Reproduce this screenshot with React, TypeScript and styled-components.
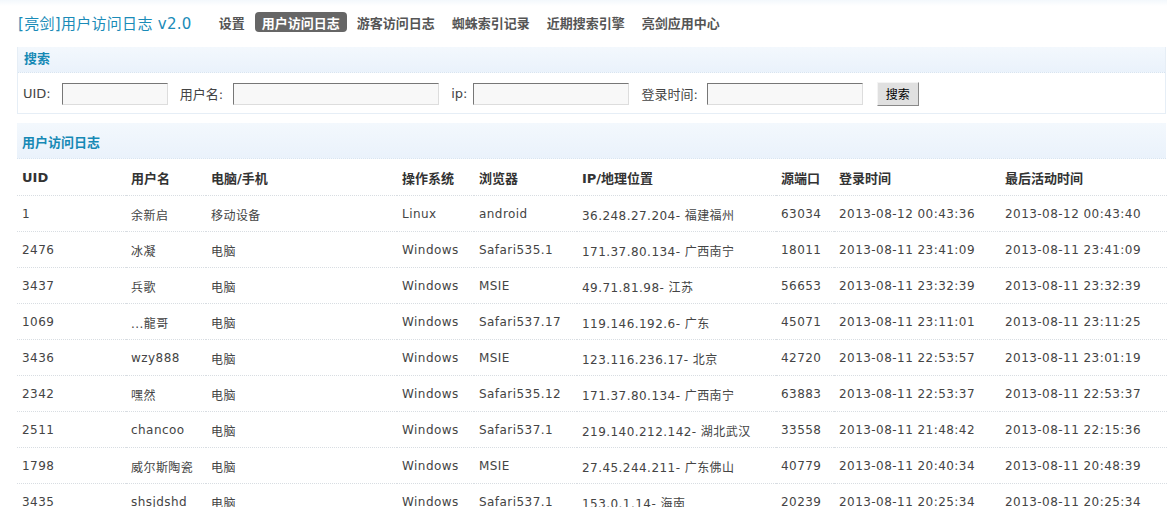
import styled, { createGlobalStyle } from 'styled-components';

const GlobalStyle = createGlobalStyle`
  html, body {
    margin: 0;
    padding: 0;
    background: #fff;
  }
  body {
    font-family: 'DejaVu Sans', 'Noto Sans CJK SC', sans-serif;
    font-size: 12px;
    color: #444;
  }
`;

const Page = styled.div`
  width: 1167px;
  height: 507px;
  overflow: hidden;
  padding: 0 1px 0 17px;
  box-sizing: border-box;
  background: linear-gradient(to bottom, #f3f8fc 0, #fff 6px);
`;

const Nav = styled.div`
  display: flex;
  align-items: center;
  gap: 3px;
  height: 44px;
  padding-left: 1px;
`;

const Title = styled.h1`
  margin: 0 17px 0 0;
  font-size: 15px;
  font-weight: normal;
  color: #1a8bb8;
  letter-spacing: 0.3px;
`;

const NavItem = styled.a<{ $active?: boolean }>`
  display: inline-flex;
  align-items: center;
  height: 20px;
  padding: 0 7px;
  border-radius: 4px;
  font-size: 13px;
  font-weight: bold;
  color: ${(p) => (p.$active ? '#fff' : '#555')};
  background: ${(p) => (p.$active ? '#666' : 'transparent')};
  white-space: nowrap;
`;

const Panel = styled.div`
  border: 1px solid #e6eef6;
  border-top: none;
  margin-top: 3px;
`;

const PanelHead = styled.div<{ $tall?: boolean }>`
  display: flex;
  align-items: ${(p) => (p.$tall ? 'center' : 'flex-start')};
  height: ${(p) => (p.$tall ? '36px' : '26px')};
  padding: ${(p) => (p.$tall ? '1px 5px 0' : '1px 6px 0')};
  box-sizing: border-box;
  background: linear-gradient(to bottom, #f3f8fd, #eaf2fb);
  border-bottom: 1px dotted #d8e4f0;
  font-weight: bold;
  color: #1689b5;
  font-size: 13px;
`;

const SearchRow = styled.form`
  display: flex;
  align-items: center;
  height: 40px;
  padding-left: 5px;
  padding-top: 1px;
  box-sizing: border-box;
`;

const Label = styled.label<{ $gap: number }>`
  margin-right: ${(p) => p.$gap}px;
  font-size: 13px;
  color: #444;
  white-space: nowrap;
`;

const Field = styled.input<{ $w: number }>`
  width: ${(p) => p.$w}px;
  height: 22px;
  box-sizing: border-box;
  margin: 0 12px 0 0;
  border: 1px solid #999;
  border-top-color: #777;
  border-left-color: #777;
  border-right-color: #ddd;
  border-bottom-color: #ddd;
  background: #f8f8f8;
  padding: 0 3px;
  font: inherit;
`;

const Button = styled.button`
  height: 24px;
  width: 42px;
  margin-left: 2px;
  padding: 0;
  border: 1px solid #888;
  border-top-color: #f4f4f4;
  border-left-color: #f4f4f4;
  background: #e0e0e0;
  color: #000;
  font-family: 'Noto Sans CJK SC', sans-serif;
  font-size: 12px;
`;

const ListPanel = styled(Panel)`
  margin-top: 9px;
  border: none;
`;

const Table = styled.table`
  width: 1150px;
  table-layout: fixed;
  border-collapse: collapse;
`;

const Th = styled.th`
  height: 35px;
  padding: 1px 5px 0;
  text-align: left;
  font-size: 13px;
  font-weight: bold;
  color: #333;
  border-bottom: 1px dotted #d8dde2;
  white-space: nowrap;
`;

const Td = styled.td`
  height: 34px;
  padding: 1px 5px 0;
  color: #444;
  border-bottom: 1px dotted #d8dde2;
  white-space: nowrap;
  letter-spacing: 0.45px;
`;

const columns = [
  { name: 'UID', w: 109 },
  { name: '用户名', w: 80 },
  { name: '电脑/手机', w: 191 },
  { name: '操作系统', w: 77 },
  { name: '浏览器', w: 103 },
  { name: 'IP/地理位置', w: 199 },
  { name: '源端口', w: 58 },
  { name: '登录时间', w: 166 },
  { name: '最后活动时间', w: 167 },
];

const rows = [
  ['1', '余新启', '移动设备', 'Linux', 'android', '36.248.27.204- 福建福州', '63034', '2013-08-12 00:43:36', '2013-08-12 00:43:40'],
  ['2476', '冰凝', '电脑', 'Windows', 'Safari535.1', '171.37.80.134- 广西南宁', '18011', '2013-08-11 23:41:09', '2013-08-11 23:41:09'],
  ['3437', '兵歌', '电脑', 'Windows', 'MSIE', '49.71.81.98- 江苏', '56653', '2013-08-11 23:32:39', '2013-08-11 23:32:39'],
  ['1069', '...龍哥', '电脑', 'Windows', 'Safari537.17', '119.146.192.6- 广东', '45071', '2013-08-11 23:11:01', '2013-08-11 23:11:25'],
  ['3436', 'wzy888', '电脑', 'Windows', 'MSIE', '123.116.236.17- 北京', '42720', '2013-08-11 22:53:57', '2013-08-11 23:01:19'],
  ['2342', '嘿然', '电脑', 'Windows', 'Safari535.12', '171.37.80.134- 广西南宁', '63883', '2013-08-11 22:53:37', '2013-08-11 22:53:37'],
  ['2511', 'chancoo', '电脑', 'Windows', 'Safari537.1', '219.140.212.142- 湖北武汉', '33558', '2013-08-11 21:48:42', '2013-08-11 22:15:36'],
  ['1798', '威尔斯陶瓷', '电脑', 'Windows', 'MSIE', '27.45.244.211- 广东佛山', '40779', '2013-08-11 20:40:34', '2013-08-11 20:48:39'],
  ['3435', 'shsjdshd', '电脑', 'Windows', 'Safari537.1', '153.0.1.14- 海南', '20239', '2013-08-11 20:25:34', '2013-08-11 20:25:34'],
];

const navItems = ['设置', '用户访问日志', '游客访问日志', '蜘蛛索引记录', '近期搜索引擎', '亮剑应用中心'];

export default function App() {
  return (
    <Page>
      <GlobalStyle />
      <Nav>
        <Title>[亮剑]用户访问日志 v2.0</Title>
        {navItems.map((n) => (
          <NavItem key={n} $active={n === '用户访问日志'}>
            {n}
          </NavItem>
        ))}
      </Nav>

      <Panel>
        <PanelHead>搜索</PanelHead>
        <SearchRow onSubmit={(e) => e.preventDefault()}>
          <Label $gap={11}>UID:</Label>
          <Field $w={106} />
          <Label $gap={10}>用户名:</Label>
          <Field $w={206} />
          <Label $gap={6}>ip:</Label>
          <Field $w={156} />
          <Label $gap={9}>登录时间:</Label>
          <Field $w={156} />
          <Button type='submit'>搜索</Button>
        </SearchRow>
      </Panel>

      <ListPanel>
        <PanelHead $tall>用户访问日志</PanelHead>
        <Table>
          <colgroup>
            {columns.map((c) => (
              <col key={c.name} style={{ width: c.w }} />
            ))}
          </colgroup>
          <thead>
            <tr>
              {columns.map((c) => (
                <Th key={c.name}>{c.name}</Th>
              ))}
            </tr>
          </thead>
          <tbody>
            {rows.map((r) => (
              <tr key={r[0]}>
                {r.map((cell, i) => (
                  <Td key={i}>{cell}</Td>
                ))}
              </tr>
            ))}
          </tbody>
        </Table>
      </ListPanel>
    </Page>
  );
}
